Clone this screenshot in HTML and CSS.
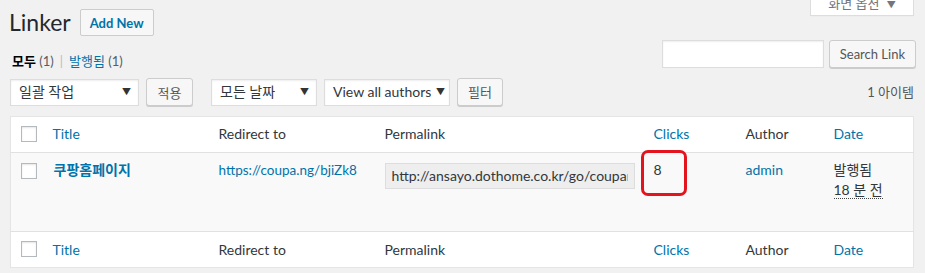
FILE: index.html
```html
<!DOCTYPE html>
<html lang="ko">
<head>
  <meta charset="UTF-8" />
  <title>Linker</title>
  <link rel="stylesheet" href="styles.css">
</head>
<body>
  <div class="wrap">
    <div class="screen-meta">
      <button class="screen-options">화면 옵션 <span class="caret">&#9660;</span></button>
    </div>

    <div class="page-head">
      <h1>Linker</h1>
      <button class="add-new">Add New</button>
    </div>

    <div class="view-row">
      <ul class="subsubsub">
        <li><strong>모두</strong> <span class="count">(1)</span></li>
        <li class="sep">|</li>
        <li><a href="#">발행됨 <span class="count">(1)</span></a></li>
      </ul>
      <div class="search-box">
        <input type="text" class="search-input" />
        <button class="button">Search Link</button>
      </div>
    </div>

    <div class="tablenav">
      <div class="select bulk">일괄 작업 <span class="arrow">&#9660;</span></div>
      <button class="button apply">적용</button>
      <div class="select dates">모든 날짜 <span class="arrow">&#9660;</span></div>
      <div class="select authors">View all authors <span class="arrow">&#9660;</span></div>
      <button class="button">필터</button>
      <span class="num-items">1 아이템</span>
    </div>

    <table class="list-table">
      <colgroup>
        <col class="col-cb">
        <col class="col-title">
        <col class="col-redirect">
        <col class="col-permalink">
        <col class="col-clicks">
        <col class="col-author">
        <col class="col-date">
      </colgroup>
      <thead>
        <tr>
          <td class="cb"><span class="checkbox"></span></td>
          <th><a href="#">Title</a></th>
          <th>Redirect to</th>
          <th>Permalink</th>
          <th><a href="#">Clicks</a></th>
          <th>Author</th>
          <th><a href="#">Date</a></th>
        </tr>
      </thead>
      <tbody>
        <tr>
          <td class="cb"><span class="checkbox"></span></td>
          <td><a href="#" class="row-title">쿠팡홈페이지</a></td>
          <td><a href="#" class="redirect">https://coupa.ng/bjiZk8</a></td>
          <td><input type="text" class="permalink" value="http://ansayo.dothome.co.kr/go/coupang" readonly /></td>
          <td class="clicks">8<span class="highlight"></span></td>
          <td><a href="#">admin</a></td>
          <td>발행됨<br><abbr title="2019-01-01">18 분 전</abbr></td>
        </tr>
      </tbody>
      <tfoot>
        <tr>
          <td class="cb"><span class="checkbox"></span></td>
          <th><a href="#">Title</a></th>
          <th>Redirect to</th>
          <th>Permalink</th>
          <th><a href="#">Clicks</a></th>
          <th>Author</th>
          <th><a href="#">Date</a></th>
        </tr>
      </tfoot>
    </table>
  </div>
</body>
</html>
```

FILE: styles.css
```css
* {
  box-sizing: border-box;
}

body {
  margin: 0;
  background: #f1f1f1;
  color: #444;
  font-family: 'Lato', 'Noto Sans CJK KR', sans-serif;
  font-size: 13px;
  line-height: 1.4;
}

a {
  color: #0073aa;
  text-decoration: none;
}

.wrap {
  padding: 0 11px 0 10px;
}

/* screen options tab, cut off by the top edge */
.screen-meta {
  float: right;
  margin-top: -11px;
}

.screen-options {
  height: 27px;
  width: 104px;
  padding: 0 10px;
  background: #fff;
  border: 1px solid #ddd;
  border-top: none;
  color: #72777c;
  font-family: inherit;
  font-size: 13px;
  box-shadow: 0 1px 1px -1px rgba(0, 0, 0, 0.1);
}

.screen-options .caret {
  font-size: 9px;
  margin-left: 4px;
}

.page-head {
  display: flex;
  align-items: center;
  padding-top: 9px;
}

h1 {
  margin: 0 9px 0 -1px;
  font-size: 23px;
  font-weight: 400;
  color: #23282d;
  line-height: 27px;
}

.add-new {
  height: 27px;
  padding: 0 9px;
  background: #f7f7f7;
  border: 1px solid #ccc;
  border-radius: 2px;
  color: #0073aa;
  font-family: inherit;
  font-size: 13px;
  font-weight: 700;
}

.view-row {
  display: flex;
  justify-content: space-between;
  align-items: flex-end;
  margin-top: 4px;
}

.subsubsub {
  list-style: none;
  margin: 0 0 -3px 2px;
  padding: 0;
  display: flex;
  gap: 6px;
  font-size: 13px;
  color: #666;
  line-height: 20px;
}

.subsubsub strong {
  color: #000;
}

.subsubsub .count {
  color: #555d66;
  font-size: 13px;
}

.subsubsub .sep {
  color: #bbb;
}

.search-box {
  display: flex;
  gap: 5px;
  margin-right: -2px;
}

.search-input {
  width: 162px;
  height: 28px;
  border: 1px solid #ddd;
  background: #fff;
  box-shadow: inset 0 1px 2px rgba(0, 0, 0, 0.07);
}

.button {
  height: 28px;
  padding: 0 10px 1px;
  background: #f7f7f7;
  border: 1px solid #ccc;
  border-radius: 3px;
  box-shadow: 0 1px 0 #ccc;
  color: #555;
  font-family: inherit;
  font-size: 13px;
}

.tablenav {
  display: flex;
  align-items: center;
  gap: 7px;
  margin-top: 10px;
  height: 28px;
}

.select {
  display: flex;
  align-items: center;
  justify-content: space-between;
  height: 27px;
  padding: 0 7px 0 8px;
  background: #fff;
  border: 1px solid #ddd;
  box-shadow: inset 0 1px 2px rgba(0, 0, 0, 0.07);
  color: #32373c;
  font-size: 14px;
}

.select .arrow {
  font-size: 9px;
  color: #333;
}

.bulk {
  width: 129px;
}

.dates {
  width: 106px;
  margin-left: 11px;
}

.authors {
  width: 126px;
  padding-right: 4px;
}

.apply {
  width: 47px;
  padding: 0;
}

.num-items {
  margin-left: auto;
  color: #555;
}

/* list table */
.list-table {
  width: 100%;
  margin-top: 10px;
  border-collapse: collapse;
  table-layout: fixed;
  background: #fff;
  border: 1px solid #e5e5e5;
  box-shadow: 0 1px 1px rgba(0, 0, 0, 0.04);
}

.col-cb { width: 32px; }
.col-title { width: 166px; }
.col-redirect { width: 166px; }
.col-permalink { width: 269px; }
.col-clicks { width: 92px; }
.col-author { width: 88px; }

.list-table th,
.list-table td {
  text-align: left;
  font-weight: 400;
  padding: 8px 10px;
  vertical-align: top;
  color: #32373c;
  font-size: 14px;
}

.list-table thead th,
.list-table thead td {
  height: 35px;
  border-bottom: 1px solid #e1e1e1;
  padding-top: 7px;
}

.list-table tfoot th,
.list-table tfoot td {
  height: 36px;
  border-top: 1px solid #e1e1e1;
  padding-top: 8px;
}

.list-table tbody tr {
  background: #f9f9f9;
}

.list-table tbody td {
  height: 79px;
  padding-top: 7px;
  line-height: 20px;
}

.list-table td.cb {
  padding: 9px 0 0 10px;
}

.list-table tbody td.cb {
  padding-top: 10px;
}

.checkbox {
  display: block;
  width: 16px;
  height: 16px;
  background: #fff;
  border: 1px solid #b4b9be;
  box-shadow: inset 0 1px 2px rgba(0, 0, 0, 0.1);
}

.row-title {
  font-weight: 700;
  font-size: 14px;
  margin-left: 1px;
}

.redirect {
  font-size: 13.5px;
}

.permalink {
  width: 250px;
  height: 26px;
  margin: 3px 0 0;
  padding: 0 6px;
  background: #eee;
  border: 1px solid #ddd;
  color: #32373c;
  font-family: inherit;
  font-size: 14px;
}

.clicks {
  position: relative;
}

.highlight {
  position: absolute;
  left: -3px;
  top: -3px;
  width: 46px;
  height: 46px;
  border: 3px solid #e3141d;
  border-radius: 7px;
}

abbr {
  text-decoration: none;
  border-bottom: 1px dotted #444;
}
```
